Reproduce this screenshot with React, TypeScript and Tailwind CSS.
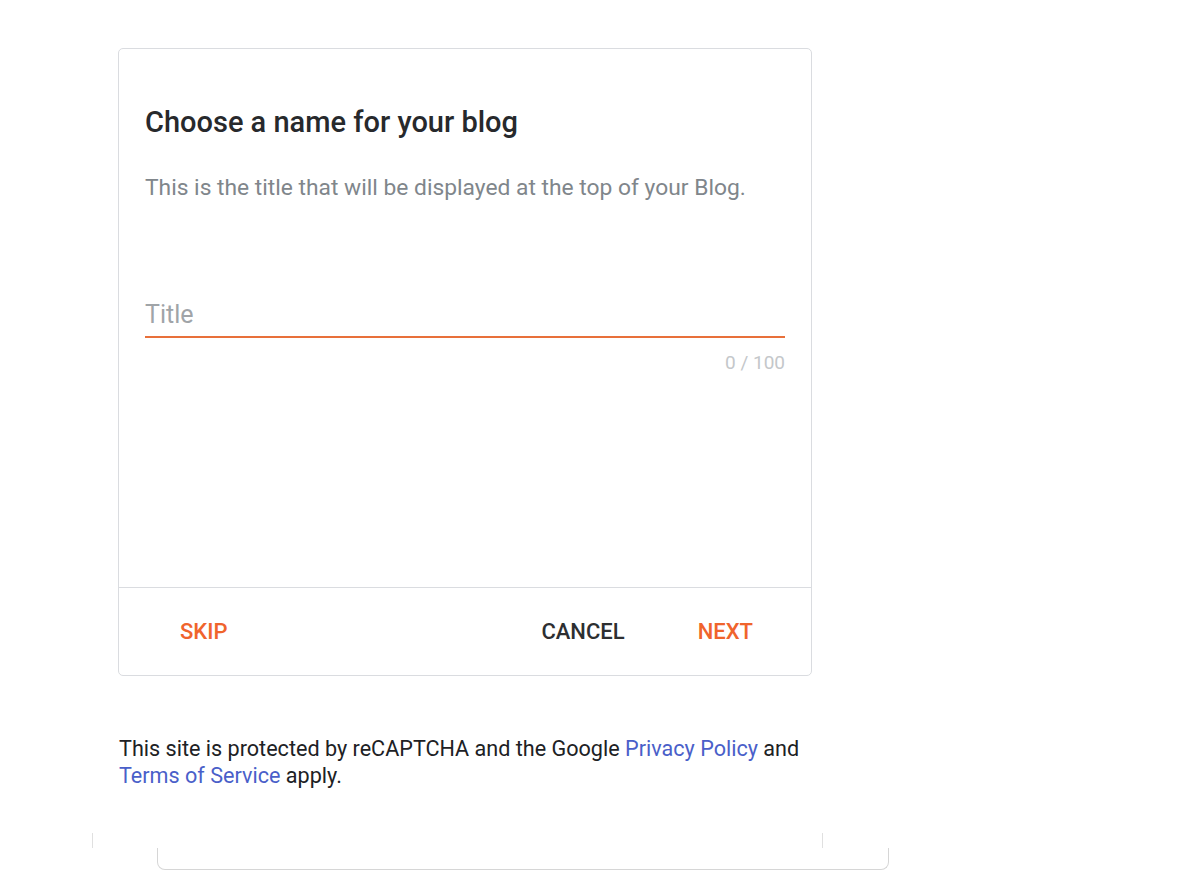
export default function App() {
  return (
    <div
      className="min-h-[878px] w-[1200px] bg-white overflow-hidden"
      style={{ fontFamily: "Roboto, 'Noto Sans', Arial, sans-serif" }}
    >
      <div className="pt-[48px] pl-[118px]">
        <div className="w-[694px] h-[628px] rounded-[5px] border border-[#dadce0] flex flex-col">
          <div className="flex-1 px-[26px] pt-[57px]">
            <h1 className="text-[29px] leading-[32px] font-medium text-[#27292c]">
              Choose a name for your blog
            </h1>
            <p className="mt-[41px] text-[22.8px] leading-[18px] text-[#80868b]">
              This is the title that will be displayed at the top of your Blog.
            </p>
            <div className="mt-[106px] w-[640px]">
              <div className="text-[25px] leading-[24px] text-[#a0a4a8] pb-[9px] border-b-2 border-[#e8703a]">
                Title
              </div>
              <div className="mt-[15px] text-right text-[19px] leading-[20px] text-[#c4c7ca]">
                0 / 100
              </div>
            </div>
          </div>
          <div className="h-[88px] border-t border-[#dadce0] flex items-center pl-[61px] pr-[58px] text-[22px] font-medium">
            <button className="text-[#f0642c]">SKIP</button>
            <div className="flex-1" />
            <button className="text-[#2d2f31]">CANCEL</button>
            <button className="ml-[73px] text-[#f0642c]">NEXT</button>
          </div>
        </div>
        <p className="mt-[59px] ml-[1px] w-[710px] text-[21.6px] leading-[27px] text-[#202124]">
          This site is protected by reCAPTCHA and the Google{" "}
          <a className="text-[#4a5fc9]">Privacy Policy</a> and{" "}
          <a className="text-[#4a5fc9]">Terms of Service</a> apply.
        </p>
      </div>
      <div className="mt-[44px] ml-[92px] w-[731px] h-[15px] border-l border-r border-[#e0e0e0]" />
      <div className="ml-[157px] w-[732px] h-[22px] border-l border-r border-b border-[#d6d6d6] rounded-b-[8px]" />
    </div>
  );
}
